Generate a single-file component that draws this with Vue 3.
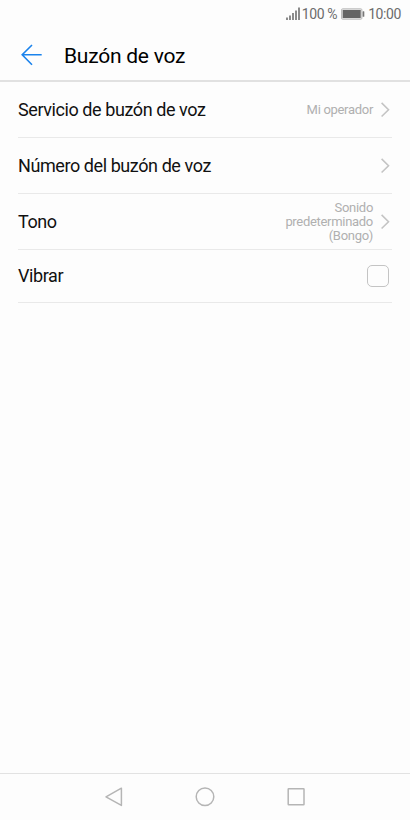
<script setup>
const rows = [
  { label: 'Servicio de buzón de voz', value: ['Mi operador'], kind: 'link' },
  { label: 'Número del buzón de voz', value: [], kind: 'link' },
  { label: 'Tono', value: ['Sonido', 'predeterminado', '(Bongo)'], kind: 'link' },
  { label: 'Vibrar', value: [], kind: 'check' },
]
</script>

<template>
  <div class="screen">
    <div class="status">
      <svg class="signal" width="14" height="14" viewBox="0 0 14 14">
        <path d="M1 10.5V13M4 8.5V13M7 6V13M10 3.5V13M13 0.5V13" stroke="#777" stroke-width="1.7" fill="none" />
      </svg>
      <span class="percent">100 %</span>
      <svg class="battery" width="24" height="12" viewBox="0 0 24 12">
        <rect x="0.5" y="0.8" width="20.4" height="10.4" rx="1" fill="#e4e4e4" stroke="#bcbcbc" />
        <rect x="1.7" y="2" width="18" height="8" fill="#656565" />
        <rect x="21.6" y="3.2" width="1.7" height="5.6" rx="0.5" fill="#777" />
      </svg>
      <span class="clock">10:00</span>
    </div>
    <header class="header">
      <svg class="back" width="22" height="22" viewBox="0 0 22 22">
        <path d="M20.7 10.7H1.2M11 1L1.2 10.7L11 20.7" fill="none" stroke="#1b83ec" stroke-width="1.6" />
      </svg>
      <h1 class="title">Buzón de voz</h1>
    </header>
    <main class="list">
      <div v-for="row in rows" :key="row.label" class="row" :class="row.kind">
        <span class="label">{{ row.label }}</span>
        <span class="value"><span v-for="line in row.value" :key="line">{{ line }}</span></span>
        <svg v-if="row.kind === 'link'" class="chevron" width="9" height="16" viewBox="0 0 9 16">
          <path d="M0.6 0.9L7.5 7.7L0.6 14.5" fill="none" stroke="#c4c4c4" stroke-width="1.6" />
        </svg>
        <span v-else class="box"></span>
      </div>
    </main>
    <nav class="nav">
      <svg width="22" height="22" viewBox="0 0 22 22">
        <path d="M18.4 2.2V19.4L3 10.8Z" stroke-linejoin="round" />
      </svg>
      <svg width="22" height="22" viewBox="0 0 22 22">
        <circle cx="11" cy="10.8" r="8.8" />
      </svg>
      <svg width="22" height="22" viewBox="0 0 22 22">
        <rect x="3.2" y="2.8" width="15.8" height="16" rx="0.5" />
      </svg>
    </nav>
  </div>
</template>

<style>
body {
  background: #fdfdfd;
}
</style>

<style scoped>
.screen {
  box-sizing: border-box;
  width: 410px;
  height: 820px;
  display: flex;
  flex-direction: column;
  background: #fdfdfd;
  font-family: Roboto, sans-serif;
  color: #111;
}
.status {
  height: 28px;
  flex: none;
  display: flex;
  align-items: center;
  justify-content: flex-end;
  padding-right: 9px;
  font-size: 14px;
  letter-spacing: -0.4px;
  color: #6c6c6c;
}
.signal {
  margin-right: 2px;
}
.battery {
  margin: 0 3px 0 4px;
}
.header {
  height: 54px;
  flex: none;
  box-sizing: border-box;
  display: flex;
  align-items: center;
  padding: 2px 0 0 21px;
  border-bottom: 2px solid #e1e1e1;
}
.title {
  margin: 1px 0 0 21px;
  font-size: 21px;
  line-height: 28px;
  letter-spacing: -0.25px;
  font-weight: 400;
  color: #000;
}
.list {
  flex: 1;
  padding: 0 18px;
}
.row {
  box-sizing: border-box;
  height: 56px;
  display: flex;
  align-items: center;
  border-bottom: 1px solid #e9e9e9;
  padding-right: 3px;
}
.row.link {
  padding-right: 2px;
}
.row.check {
  height: 53px;
}
.label {
  flex: 1;
  font-size: 18px;
  letter-spacing: -0.42px;
}
.check .label {
  padding-bottom: 2px;
}
.value {
  display: flex;
  flex-direction: column;
  align-items: flex-end;
  font-size: 13px;
  line-height: 14px;
  letter-spacing: -0.3px;
  color: #b0b0b0;
}
.chevron {
  margin-left: 8px;
}
.box {
  box-sizing: border-box;
  width: 22px;
  height: 22px;
  border: 1px solid #c4c4c4;
  border-radius: 5px;
}
.nav {
  height: 47px;
  flex: none;
  box-sizing: border-box;
  border-top: 1px solid #e2e2e2;
  display: flex;
  align-items: center;
  justify-content: center;
  gap: 69px;
}
.nav svg {
  fill: none;
  stroke: #b5b5b5;
  stroke-width: 1.5;
}
</style>
